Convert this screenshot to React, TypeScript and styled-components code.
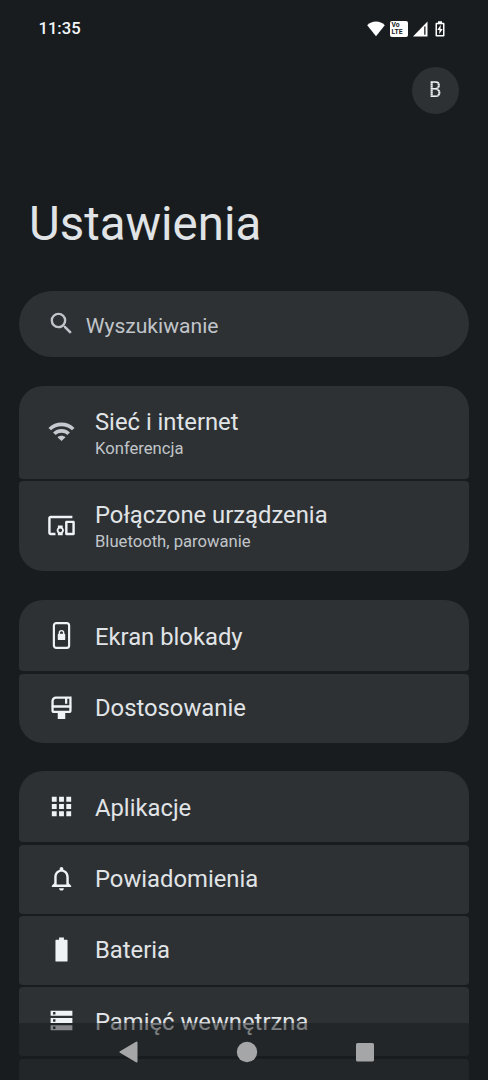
import React from "react";
import styled, { createGlobalStyle } from "styled-components";

const GlobalStyle = createGlobalStyle`
  * { box-sizing: border-box; }
  body { margin: 0; background: #191c1e; }
`;

const Screen = styled.div`
  position: relative;
  display: flex;
  flex-direction: column;
  width: 488px;
  height: 1080px;
  overflow: hidden;
  background: #191c1e;
  color: #e1e4e6;
  font-family: Roboto, "Liberation Sans", sans-serif;
`;

const StatusBar = styled.header`
  display: flex;
  flex: none;
  align-items: center;
  justify-content: space-between;
  height: 57px;
  padding: 0 43px 0 38.5px;
`;

const Clock = styled.span`
  font-size: 16.6px;
  font-weight: 500;
  line-height: 20px;
  color: #f3f7fa;
`;

const StatusIcons = styled.div`
  display: flex;
  align-items: center;
`;

const StatusGlyph = styled.svg<{ $gap?: number }>`
  display: block;
  margin-left: ${(p) => p.$gap ?? 0}px;
`;

const VolteBadge = styled.div`
  display: flex;
  flex-direction: column;
  justify-content: center;
  width: 18px;
  height: 16px;
  margin-left: 5px;
  padding-left: 2px;
  border-radius: 2px;
  background: #fff;
  color: #191c1e;
  font-size: 6.8px;
  font-weight: 700;
  line-height: 6.5px;
`;

const AccountRow = styled.div`
  display: flex;
  flex: none;
  justify-content: flex-end;
  padding: 9.5px 29px 0 0;
`;

const Avatar = styled.div`
  display: flex;
  align-items: center;
  justify-content: center;
  width: 47.5px;
  height: 47.5px;
  border-radius: 50%;
  background: #2d3134;
  color: #f0f3f6;
  font-family: "DejaVu Sans Mono", monospace;
  font-size: 20.5px;
  line-height: 24px;
`;

const DottedLetter = styled.span`
  mask-image: repeating-linear-gradient(to bottom, #000 0 1px, rgba(0, 0, 0, 0.75) 1px 2px);
`;

const Title = styled.h1`
  flex: none;
  margin: 81px 0 0 29px;
  font-size: 47.4px;
  font-weight: 400;
  line-height: 58px;
`;

const SearchBar = styled.div`
  display: flex;
  flex: none;
  align-items: center;
  height: 66px;
  margin: 38px 19.3px 0;
  padding-left: 28px;
  border-radius: 33px;
  background: #2d3134;
  color: #c1c5c9;
  font-size: 21.1px;
`;

const SearchLabel = styled.span`
  margin: 2.5px 0 0 9.4px;
`;

const Group = styled.section`
  display: flex;
  flex: none;
  flex-direction: column;
  gap: 2.4px;
  margin: 28.6px 19.3px 0;
`;

const Row = styled.div<{ $height: number; $last: boolean; $first: boolean }>`
  display: flex;
  align-items: center;
  height: ${(p) => p.$height}px;
  padding: ${(p) => (p.$first ? "1.5px" : "0")} 0 0 28px;
  border-radius: ${(p) => (p.$first ? "24px 24px" : "4px 4px")} ${(p) => (p.$last ? "24px 24px" : "4px 4px")};
  background: #2d3134;
`;

const Labels = styled.div<{ $drop: number }>`
  display: flex;
  flex-direction: column;
  margin-top: ${(p) => p.$drop}px;
  margin-left: 18.7px;
`;

const Label = styled.span`
  font-size: 23.8px;
  line-height: 28px;
`;

const Summary = styled.span`
  margin-top: 3.4px;
  font-size: 16.65px;
  line-height: 20px;
  color: #c1c5c9;
`;

const Icon = styled.svg<{ $tone?: string; $lift?: number }>`
  display: block;
  flex: none;
  width: 29px;
  height: 29px;
  margin-bottom: ${(p) => p.$lift ?? 1.6}px;
  fill: ${(p) => p.$tone ?? "#f0f3f6"};
`;

const NavBar = styled.nav`
  position: absolute;
  left: 0;
  right: 0;
  bottom: 0;
  display: flex;
  justify-content: center;
  align-items: center;
  gap: 97px;
  height: 57px;
  padding: 0 0 0 6px;
  background: rgba(25, 28, 30, 0.5);
`;

const icons: Record<string, React.ReactNode> = {
  search: (
    <path d="M15.5 14h-.79l-.28-.27A6.471 6.471 0 0 0 16 9.5 6.5 6.5 0 1 0 9.5 16c1.61 0 3.09-.59 4.23-1.57l.27.28v.79l5 4.99L20.49 19l-4.99-5zm-6 0C7.01 14 5 11.99 5 9.5S7.01 5 9.5 5 14 7.01 14 9.5 11.99 14 9.5 14z" />
  ),
  wifi: (
    <path d="M1.200 9l2.150 2.050c4.800-4.650 12.500-4.650 17.300 0L22.800 9C16.800 3.100 7.200 3.100 1.200 9zM8.700 16.700L12 19.800l3.300-3.100c-1.700-1.700-4.900-1.700-6.600 0zM5 12.800l2.200 2.100c2.600-2.500 7-2.500 9.600 0l2.200-2.100c-3.900-3.700-10.100-3.700-14 0z" />
  ),
  devices: (
    <path d="M3 6h18V4H3c-1.1 0-2 .9-2 2v12c0 1.1.9 2 2 2h4v-2H3V6zm10 6H9v1.78c-.61.55-1 1.33-1 2.22s.39 1.67 1 2.22V20h4v-1.78c.61-.55 1-1.34 1-2.22s-.39-1.67-1-2.22V12zm-2 5.5c-.83 0-1.5-.67-1.5-1.5s.67-1.5 1.5-1.5 1.5.67 1.5 1.5-.67 1.5-1.5 1.5zM22 8h-6c-.5 0-1 .5-1 1v10c0 .5.5 1 1 1h6c.5 0 1-.5 1-1V9c0-.5-.5-1-1-1zm-1 10h-4v-8h4v8z" />
  ),
  lock: (
    <>
      <rect x="5.7" y="1.8" width="12.6" height="20.4" rx="2" fill="none" stroke="#f0f3f6" strokeWidth="1.8" />
      <rect x="8.9" y="10.6" width="6.2" height="5.200" rx="0.8" />
      <path d="M10.2 11V9.700a1.8 1.8 0 0 1 3.6 0V11" fill="none" stroke="#f0f3f6" strokeWidth="1.1" />
    </>
  ),
  brush: (
    <>
      <path d="M7.400 3.800h12v10.700a1.2 1.2 0 0 1-1.2 1.2H5.800a1.2 1.2 0 0 1-1.2-1.2V6.600A2.8 2.8 0 0 1 7.400 3.800Z" fill="none" stroke="#f0f3f6" strokeWidth="1.9" />
      <path d="M4 10.200h16v2H4zM14.900 3.500h1.900v5.300h-1.900zM8.900 15h6.200v6.500H8.900z" />
    </>
  ),
  apps: (
    <path d="M4 8h4V4H4v4zm6 12h4v-4h-4v4zm-6 0h4v-4H4v4zm0-6h4v-4H4v4zm6 0h4v-4h-4v4zm6-10v4h4V4h-4zm-6 4h4V4h-4v4zm6 6h4v-4h-4v4zm0 6h4v-4h-4v4z" />
  ),
  bell: (
    <path d="M12 22c1.1 0 2-.9 2-2h-4c0 1.1.9 2 2 2zm6-6v-5c0-3.07-1.63-5.64-4.5-6.32V4c0-.83-.67-1.5-1.5-1.5s-1.5.67-1.5 1.5v.68C7.64 5.36 6 7.92 6 11v5l-2 2v1h16v-1l-2-2zm-2 1H8v-6c0-2.48 1.51-4.5 4-4.5s4 2.02 4 4.5v6z" />
  ),
  battery: (
    <path d="M16.500 4H14V2h-4v2H7.500Q7 4 7 4.500v17q0 .5.5.5h9q.5 0 .5-.5v-17Q17 4 16.500 4z" />
  ),
  storage: (
    <path d="M3 20h18v-4.100H3V20zm2-3h2v2H5v-2zM3 4v4.100h18V4H3zm4 3H5V5h2v2zm-4 7h18V9.900H3V14zm2-3h2v2H5v-2z" />
  ),
};

type Item = { icon: string; label: string; summary?: string; height: number; tone?: string; lift?: number };

const groups: Item[][] = [
  [
    { icon: "wifi", label: "Sieć i internet", summary: "Konferencja", height: 93, tone: "#c6c9cf", lift: 3 },
    { icon: "devices", label: "Połączone urządzenia", summary: "Bluetooth, parowanie", height: 90.5, lift: 2.2 },
  ],
  [
    { icon: "lock", label: "Ekran blokady", height: 71.2 },
    { icon: "brush", label: "Dostosowanie", height: 68.9 },
  ],
  [
    { icon: "apps", label: "Aplikacje", height: 71.2 },
    { icon: "bell", label: "Powiadomienia", height: 68.9 },
    { icon: "battery", label: "Bateria", height: 68.9 },
    { icon: "storage", label: "Pamięć wewnętrzna", height: 68.9 },
    { icon: "", label: "", height: 68.9 },
  ],
];

export default function App() {
  return (
    <Screen>
      <GlobalStyle />
      <StatusBar>
        <Clock>11:35</Clock>
        <StatusIcons>
          <StatusGlyph width="18" height="16" viewBox="0 0 18 16" fill="#fff">
            <path d="M9 15.2 0.2 4.2C2.6 1.9 5.6.6 9 .6s6.4 1.3 8.8 3.6Z" />
          </StatusGlyph>
          <VolteBadge>
            <span>Vo</span>
            <span>LTE</span>
          </VolteBadge>
          <StatusGlyph $gap={5} width="15" height="16" viewBox="0 0 15 16" fill="#fff">
            <path d="M14.5.6v14.8H0Z" />
            <path d="M11.2 5.5h1.3v8.2h-1.3z" fill="#191c1e" />
          </StatusGlyph>
          <StatusGlyph $gap={7.5} width="10" height="16" viewBox="0 0 10 16" fill="#fff">
            <path d="M3 .3h4v1.5h1.5q1 0 1 1v11.7q0 1-1 1h-7q-1 0-1-1V2.800q0-1 1-1H3Z" />
            <path d="M2 3.300h6v10.700H2z" fill="#191c1e" />
            <path d="M5.800 3.800 2.300 9h2.200l-.4 4.300L7.700 8H5.500Z" />
          </StatusGlyph>
        </StatusIcons>
      </StatusBar>
      <AccountRow>
        <Avatar>
          <DottedLetter>B</DottedLetter>
        </Avatar>
      </AccountRow>
      <Title>Ustawienia</Title>
      <SearchBar>
        <Icon viewBox="0 0 24 24" $tone="#c1c5c9">
          {icons.search}
        </Icon>
        <SearchLabel>Wyszukiwanie</SearchLabel>
      </SearchBar>
      {groups.map((items, g) => (
        <Group key={g}>
          {items.map((item, i) => (
            <Row key={i} $height={item.height} $first={i === 0} $last={i === items.length - 1}>
              {item.icon && (
                <Icon viewBox="0 0 24 24" $tone={item.tone} $lift={item.lift}>
                  {icons[item.icon]}
                </Icon>
              )}
              {item.label && (
                <Labels $drop={item.summary || i === 0 ? 1 : 0}>
                  <Label>{item.label}</Label>
                  {item.summary && <Summary>{item.summary}</Summary>}
                </Labels>
              )}
            </Row>
          ))}
        </Group>
      ))}
      <NavBar>
        <svg width="20" height="22" viewBox="0 0 20 22" fill="#a5a6a8">
          <path d="M17.500 1.500v19L1.500 11Z" stroke="#a5a6a8" strokeWidth="2" strokeLinejoin="round" />
        </svg>
        <svg width="22" height="22" viewBox="0 0 22 22" fill="#a5a6a8">
          <circle cx="11" cy="11" r="10.200" />
        </svg>
        <svg width="20" height="20" viewBox="0 0 20 20" fill="#a5a6a8">
          <rect x="1" y="1" width="18" height="18.500" rx="1.500" />
        </svg>
      </NavBar>
    </Screen>
  );
}
